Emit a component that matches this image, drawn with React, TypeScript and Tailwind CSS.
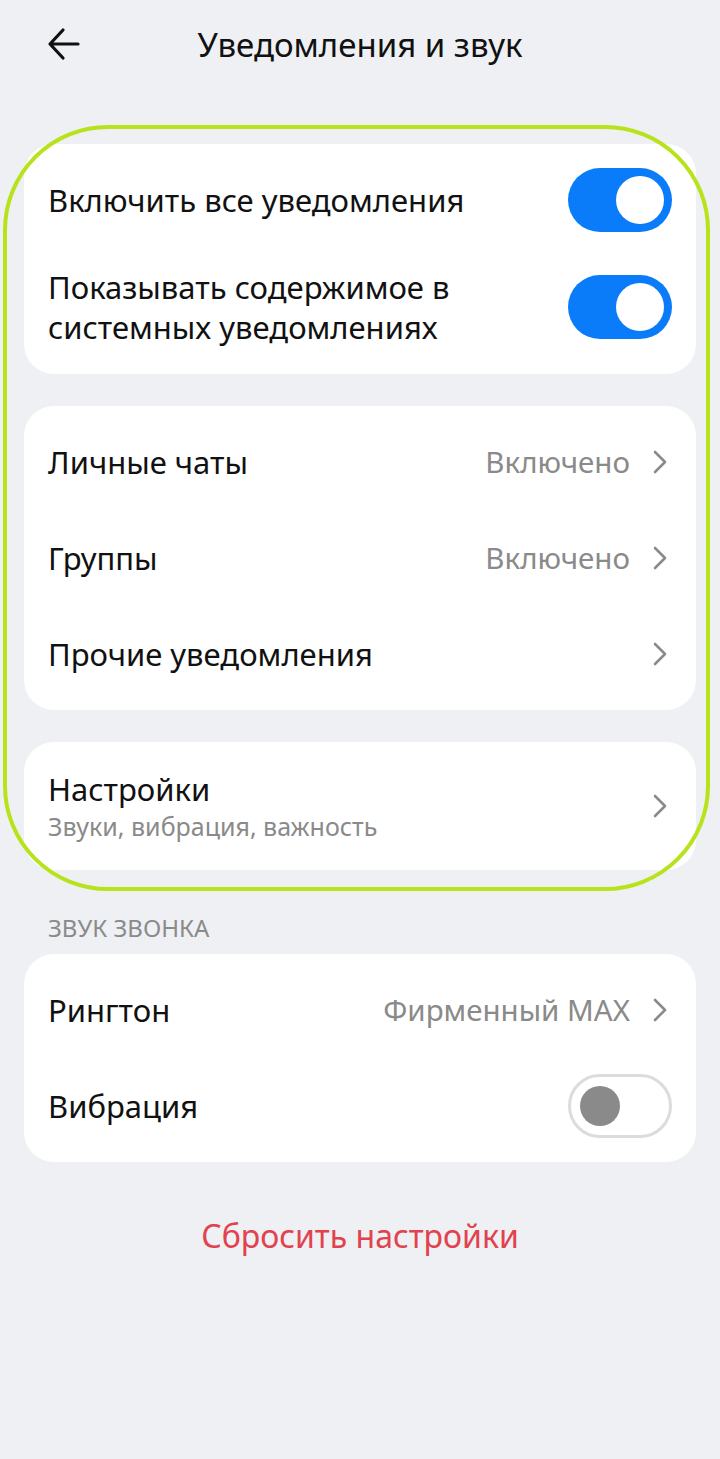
import React from 'react';

function Toggle({ on }: { on: boolean }) {
  if (on) {
    return (
      <div className="w-[104px] h-[64px] rounded-full bg-[#0a7cfa] flex items-center justify-end px-2 shrink-0">
        <div className="w-12 h-12 rounded-full bg-white" />
      </div>
    );
  }
  return (
    <div className="w-[104px] h-[64px] rounded-full border-[3px] border-[#dcdcdc] bg-white flex items-center px-[9px] shrink-0">
      <div className="w-10 h-10 rounded-full bg-[#8a8a8a]" />
    </div>
  );
}

function Chevron() {
  return (
    <svg width="16" height="26" viewBox="0 0 16 26" fill="none" className="shrink-0">
      <path d="M3 3l10 10-10 10" stroke="#8a8a8a" strokeWidth="2.6" strokeLinecap="round" strokeLinejoin="round" />
    </svg>
  );
}

function NavRow({ title, value }: { title: string; value?: string }) {
  return (
    <div className="h-24 flex items-center justify-between">
      <span className="text-[31px] text-[#111]">{title}</span>
      <div className="flex items-center gap-[22px]">
        {value && <span className="text-[29.5px] text-[#8a8a8a]">{value}</span>}
        <Chevron />
      </div>
    </div>
  );
}

export default function App() {
  return (
    <div
      className="relative w-[720px] h-[1459px] bg-[#eef0f3] overflow-hidden"
      style={{ fontFamily: '"Noto Sans", Roboto, sans-serif' }}
    >
      <header className="relative h-[90px] flex items-center justify-center">
        <svg
          width="36"
          height="36"
          viewBox="0 0 36 36"
          fill="none"
          className="absolute left-[46px] top-[26px]"
        >
          <path d="M32 18H4M17 4L4 18l13 14" stroke="#111" strokeWidth="3.2" strokeLinecap="round" strokeLinejoin="round" />
        </svg>
        <h1 className="text-[33px] leading-[44px] text-[#111] font-normal">Уведомления и звук</h1>
      </header>

      <div className="px-6 pt-[54px] flex flex-col gap-8">
        <section className="bg-white rounded-[30px] pl-6 pr-6 pt-6 pb-[27px] flex flex-col gap-[35px]">
          <div className="flex items-center justify-between">
            <span className="text-[31px] text-[#111]">Включить все уведомления</span>
            <Toggle on />
          </div>
          <div className="flex items-center justify-between">
            <span className="text-[31px] leading-[40px] text-[#111]">
              Показывать содержимое в
              <br />
              системных уведомлениях
            </span>
            <Toggle on />
          </div>
        </section>

        <section className="bg-white rounded-[30px] pl-6 pr-[28px] py-2">
          <NavRow title="Личные чаты" value="Включено" />
          <NavRow title="Группы" value="Включено" />
          <NavRow title="Прочие уведомления" />
        </section>

        <section className="bg-white rounded-[30px] pl-6 pr-[28px] h-32 flex items-center justify-between">
          <div className="flex flex-col">
            <span className="text-[31px] leading-[40px] text-[#111]">Настройки</span>
            <span className="text-[25px] leading-[34px] text-[#8a8a8a]">Звуки, вибрация, важность</span>
          </div>
          <Chevron />
        </section>
      </div>

      <div className="px-12 pt-[42px] pb-[10px] text-[24px] leading-[32px] text-[#8a8a8a]">ЗВУК ЗВОНКА</div>

      <div className="px-6">
        <section className="bg-white rounded-[30px] pl-6 pr-6 py-2">
          <div className="h-24 flex items-center justify-between pr-1">
            <span className="text-[31px] text-[#111]">Рингтон</span>
            <div className="flex items-center gap-[22px]">
              <span className="text-[29.5px] text-[#8a8a8a]">Фирменный MAX</span>
              <Chevron />
            </div>
          </div>
          <div className="h-24 flex items-center justify-between">
            <span className="text-[31px] text-[#111]">Вибрация</span>
            <Toggle on={false} />
          </div>
        </section>
      </div>

      <div className="pt-[50px] text-center text-[32px] text-[#e2424e]">Сбросить настройки</div>

      <div className="absolute left-[3px] top-[125px] w-[707px] h-[766px] rounded-[105px] border-[4px] border-[#b8e31c] pointer-events-none" />
    </div>
  );
}
